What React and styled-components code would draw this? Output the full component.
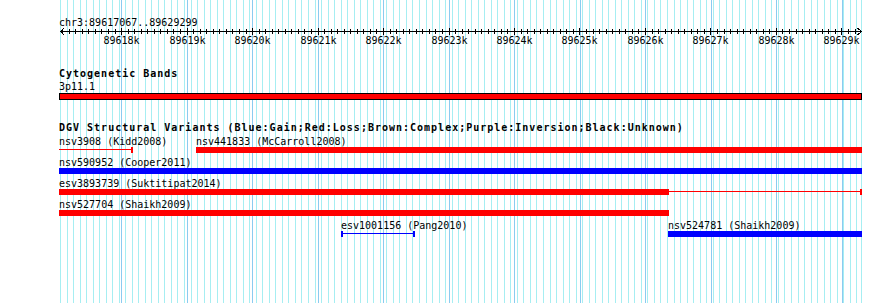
import React from 'react';
import styled, { createGlobalStyle } from 'styled-components';

const START = 89617067;
const END = 89629299;
const LEFT = 60;
const RIGHT = 861;
const SCALE = (RIGHT - LEFT) / (END - START);
const toX = (bp) => LEFT + (bp - START) * SCALE;

const RED = '#ff0000';
const BLUE = '#0000ff';
const MINOR = '#a6eef2';
const MAJOR = '#8ccbf0';

// grid: minor lines run from the left edge, major lines sit on the kb marks
const minorLines = Array.from({ length: 123 }, (_, k) => Math.round(LEFT + k * 6.527)).concat([RIGHT]);
const kbMarks = Array.from({ length: 12 }, (_, i) => 89618000 + i * 1000);
const hundreds = [];
for (let bp = 89617100; bp <= END; bp += 100) hundreds.push(bp);

const rows = [
  [
    { name: 'nsv3908 (Kidd2008)', from: 59, to: 133, color: RED, thin: true, capEnd: true },
    { name: 'nsv441833 (McCarroll2008)', from: 196, to: 862, color: RED },
  ],
  [{ name: 'nsv590952 (Cooper2011)', from: 59, to: 862, color: BLUE }],
  [{ name: 'esv3893739 (Suktitipat2014)', from: 59, to: 862, thickTo: 669, color: RED, capEnd: true }],
  [{ name: 'nsv527704 (Shaikh2009)', from: 59, to: 669, color: RED }],
  [
    { name: 'esv1001156 (Pang2010)', from: 341, to: 415, color: BLUE, thin: true, capStart: true, capEnd: true },
    { name: 'nsv524781 (Shaikh2009)', from: 668, to: 862, color: BLUE },
  ],
];

const GlobalStyle = createGlobalStyle`
  html, body {
    margin: 0;
    padding: 0;
    background: #fff;
  }
`;

const Panel = styled.div`
  position: relative;
  width: 890px;
  height: 303px;
  overflow: hidden;
  background: #fff;
  color: #000;
  font-family: "DejaVu Sans Mono", "Liberation Mono", monospace;
  font-size: 10px;
  line-height: 11px;
`;

const GridLayer = styled.svg`
  position: absolute;
  left: 0;
  top: 0;
  display: block;
`;

const Tracks = styled.div`
  position: relative;
  display: flex;
  flex-direction: column;
  padding-top: 17px;
`;

const RulerBlock = styled.section`
  display: flex;
  flex-direction: column;
`;

const TrackSection = styled.section`
  display: flex;
  flex-direction: column;
  padding-top: 22px;
`;

const Caption = styled.div`
  height: 11px;
  padding-left: 59px;
  white-space: pre;
`;

const TrackTitle = styled.h2`
  height: 11px;
  margin: 0 0 ${(p) => p.$after}px;
  padding-left: 59px;
  font-size: 10px;
  line-height: 11px;
  font-weight: 700;
  letter-spacing: 1px;
  white-space: pre;
`;

const RulerLine = styled.svg`
  display: block;
`;

const TickLabels = styled.div`
  position: relative;
  height: 11px;
`;

const TickLabel = styled.span`
  position: absolute;
  top: 0;
  transform: translateX(-50%);
  white-space: pre;
`;

const Band = styled.div`
  box-sizing: border-box;
  margin: 1px 0 0 59px;
  width: 803px;
  height: 7px;
  border: 1px solid #000;
  background: ${RED};
`;

const FeatureList = styled.div`
  display: flex;
  flex-direction: column;
`;

const FeatureRow = styled.div`
  position: relative;
  height: 21px;
`;

const FeatureName = styled.span`
  position: absolute;
  top: 0;
  white-space: pre;
`;

const Bar = styled.div`
  position: absolute;
  top: 11px;
  height: 6px;
  background: ${(p) => p.$color};
`;

const Thin = styled.div`
  position: absolute;
  top: 13px;
  height: 1px;
  background: ${(p) => p.$color};
`;

const Cap = styled.div`
  position: absolute;
  top: 11px;
  width: 2px;
  height: 6px;
  background: ${(p) => p.$color};
`;

function Grid() {
  return (
    <GridLayer width="890" height="303" shapeRendering="crispEdges">
      {minorLines.map((x, i) => (
        <line key={'m' + i} x1={x + 0.5} x2={x + 0.5} y1="0" y2="303" stroke={MINOR} />
      ))}
      {kbMarks.map((bp) => {
        const x = Math.round(toX(bp) + 0.3) + 0.5;
        return <line key={bp} x1={x} x2={x} y1="0" y2="303" stroke={MAJOR} />;
      })}
    </GridLayer>
  );
}

function Ruler() {
  return (
    <RulerBlock>
      <Caption>chr3:89617067..89629299</Caption>
      <RulerLine width="890" height="7" shapeRendering="crispEdges">
        <line x1={LEFT} x2={RIGHT + 1} y1="3.5" y2="3.5" stroke="#000" />
        <polyline points={`${LEFT + 4},0 ${LEFT + 0.5},3.5 ${LEFT + 4},7`} fill="none" stroke="#000" />
        <polyline points={`${RIGHT - 3.5},0 ${RIGHT + 0.5},3.5 ${RIGHT - 3.5},7`} fill="none" stroke="#000" />
        {hundreds.map((bp) => {
          const x = Math.round(toX(bp)) + 0.5;
          const major = bp % 1000 === 0;
          return <line key={bp} x1={x} x2={x} y1={major ? 0 : 1} y2={major ? 7 : 6} stroke="#000" />;
        })}
      </RulerLine>
      <TickLabels>
        {kbMarks.map((bp) => (
          <TickLabel key={bp} style={{ left: Math.round(toX(bp)) + 0.5 }}>
            {bp / 1000}k
          </TickLabel>
        ))}
      </TickLabels>
    </RulerBlock>
  );
}

function Feature({ f }) {
  const barEnd = f.thickTo || f.to;
  return (
    <>
      <FeatureName style={{ left: f.from }}>{f.name}</FeatureName>
      {f.thin ? (
        <Thin $color={f.color} style={{ left: f.from, width: f.to - f.from }} />
      ) : (
        <Bar $color={f.color} style={{ left: f.from, width: barEnd - f.from }} />
      )}
      {f.thickTo && <Thin $color={f.color} style={{ left: f.thickTo, width: f.to - f.thickTo }} />}
      {f.capStart && <Cap $color={f.color} style={{ left: f.from }} />}
      {f.capEnd && <Cap $color={f.color} style={{ left: f.to - 2 }} />}
    </>
  );
}

export default function App() {
  return (
    <>
      <GlobalStyle />
      <Panel>
        <Grid />
        <Tracks>
          <Ruler />
          <TrackSection>
            <TrackTitle $after={2}>Cytogenetic Bands</TrackTitle>
            <Caption>3p11.1</Caption>
            <Band />
          </TrackSection>
          <TrackSection>
            <TrackTitle $after={3}>
              DGV Structural Variants (Blue:Gain;Red:Loss;Brown:Complex;Purple:Inversion;Black:Unknown)
            </TrackTitle>
            <FeatureList>
              {rows.map((row, i) => (
                <FeatureRow key={i}>
                  {row.map((f) => (
                    <Feature key={f.name} f={f} />
                  ))}
                </FeatureRow>
              ))}
            </FeatureList>
          </TrackSection>
        </Tracks>
      </Panel>
    </>
  );
}
